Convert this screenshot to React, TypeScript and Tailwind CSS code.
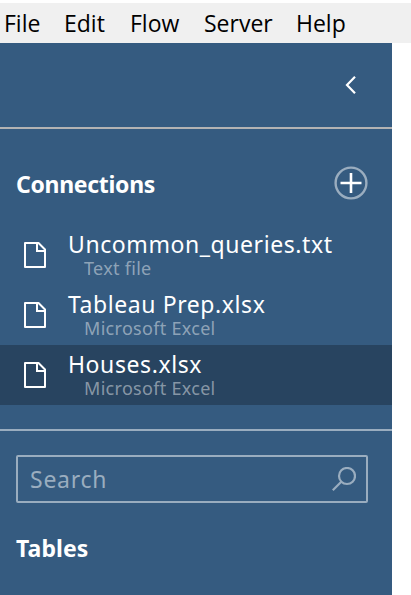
import { clsx } from "clsx";

type Connection = {
  name: string;
  kind: string;
};

const menuItems = [
  { label: "File", className: "w-[60px]" },
  { label: "Edit", className: "w-[66px]" },
  { label: "Flow", className: "w-[74px]" },
  { label: "Server", className: "w-[92px]" },
  { label: "Help", className: "" },
];

const connections: Connection[] = [
  { name: "Uncommon_queries.txt", kind: "Text file" },
  { name: "Tableau Prep.xlsx", kind: "Microsoft Excel" },
  { name: "Houses.xlsx", kind: "Microsoft Excel" },
];

function FileIcon() {
  return (
    <svg className="h-[26px] w-[22px] shrink-0" viewBox="0 0 22 26" fill="none" stroke="#fff" strokeWidth="2">
      <path d="M1 1H14.5L21 7.5V25H1Z" strokeLinejoin="round" />
      <path d="M13 1V9H21" />
    </svg>
  );
}

function ConnectionRow({ connection, selected }: { connection: Connection; selected?: boolean }) {
  return (
    <li className={clsx("flex h-[60px] items-center pl-6", selected && "bg-[#284460]")}>
      <FileIcon />
      <div className="ml-[22px] pb-[3px]">
        <p className="text-[23px] leading-7 tracking-[0.58px] whitespace-nowrap">{connection.name}</p>
        <p className="mt-px ml-4 text-[18px] leading-[18px] tracking-[0.3px] text-white/45">{connection.kind}</p>
      </div>
    </li>
  );
}

export default function App() {
  return (
    <div className="flex h-[595px] w-[411px] flex-col overflow-hidden bg-white pt-[3px] font-['Noto_Sans',sans-serif]">
      <nav className="flex h-10 shrink-0 items-center bg-[#f0f0f0] pl-1 font-['Open_Sans',sans-serif] text-[23px] text-black">
        {menuItems.map((item) => (
          <span key={item.label} className={item.className}>
            {item.label}
          </span>
        ))}
      </nav>

      <aside className="w-[392px] flex-1 bg-[#355b80] text-white">
        <div className="flex h-[86px] items-center justify-end border-b-2 border-[#b3b3b3] pr-[35px]">
          <svg className="h-5 w-3" viewBox="0 0 12 20" fill="none" stroke="#fff" strokeWidth="2.2">
            <path d="M10 1.8L2 10L10 18.2" />
          </svg>
        </div>

        <div className="flex h-24 items-center justify-between pt-3 pr-6 pl-4">
          <h2 className="pt-[3px] text-[23px] font-bold tracking-[-0.3px]">Connections</h2>
          <svg className="h-[34px] w-[34px]" viewBox="0 0 34 34" fill="none">
            <circle cx="17" cy="17" r="15.4" stroke="#9aadbf" strokeWidth="2.4" />
            <path d="M6.5 17H27.5M17 7V27" stroke="#fff" strokeWidth="2.6" />
          </svg>
        </div>

        <ul>
          {connections.map((connection) => (
            <ConnectionRow
              key={connection.name}
              connection={connection}
              selected={connection.name === "Houses.xlsx"}
            />
          ))}
        </ul>

        <div className="mt-6 border-t-2 border-[#9aadbf] px-4 pt-6 pr-6">
          <div className="flex h-12 items-center justify-between rounded-[2px] border-2 border-[#9aadbf] pr-[10px] pl-3">
            <span className="text-[23px] tracking-[0.75px] text-[#9aadbf]">Search</span>
            <svg className="h-6 w-6" viewBox="0 0 24 24" fill="none" stroke="#9aadbf" strokeWidth="2.2">
              <circle cx="15" cy="9" r="8" />
              <path d="M9.5 14.5L0.8 23.2" />
            </svg>
          </div>
          <h2 className="mt-7 text-[23px] font-bold tracking-[0.1px]">Tables</h2>
        </div>
      </aside>
    </div>
  );
}
